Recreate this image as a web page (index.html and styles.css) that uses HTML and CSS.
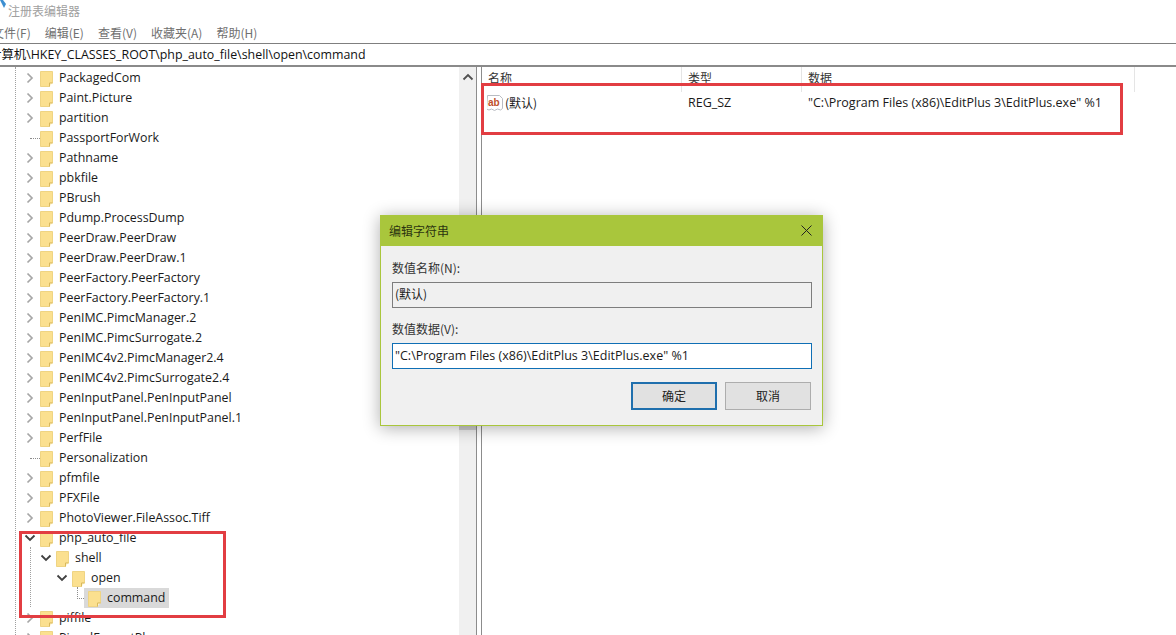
FILE: index.html
```html
<!DOCTYPE html>
<html lang="zh-CN">
<head>
<meta charset="utf-8">
<title>注册表编辑器</title>
<link rel="stylesheet" href="styles.css">
</head>
<body>
<svg class="defs" width="0" height="0" aria-hidden="true">
  <defs>
    <symbol id="folder" viewBox="0 0 13 16">
      <path d="M.5.500h12v11.500h-3v3.500H.5z" fill="#fbe08f" stroke="#efd483"/>
      <path d="M9.500 15.500V12h3" fill="#fff3c9" stroke="#d9b95c"/>
    </symbol>
    <symbol id="right" viewBox="0 0 8 12"><path d="M1.500 1.500 6 6l-4.500 4.500" fill="none" stroke="#a6a6a6" stroke-width="1.700"/></symbol>
    <symbol id="down" viewBox="0 0 12 8"><path d="M1.500 1.500 6 6l4.500-4.500" fill="none" stroke="#404040" stroke-width="1.800"/></symbol>
  </defs>
</svg>
<div class="app">
  <header class="titlebar">
    <svg class="app-icon" viewBox="0 0 6 8" aria-hidden="true"><path d="M0 0h3l3 4-2 4z" fill="#3d8fd1"/></svg>
    <span>注册表编辑器</span>
  </header>
  <nav class="menu">
    <span>文件(F)</span><span>编辑(E)</span><span>查看(V)</span><span>收藏夹(A)</span><span>帮助(H)</span>
  </nav>
  <div class="address">计算机\HKEY_CLASSES_ROOT\php_auto_file\shell\open\command</div>
  <main class="panes">
    <section class="tree-pane">
      <div class="tree" id="tree">
        <div class="guide guide-root"></div>
        <div class="guide guide-php"></div>
        <div class="row"><svg class="exp"><use href="#right"/></svg><svg class="fld"><use href="#folder"/></svg><span class="lbl">PackagedCom</span></div>
        <div class="row"><svg class="exp"><use href="#right"/></svg><svg class="fld"><use href="#folder"/></svg><span class="lbl">Paint.Picture</span></div>
        <div class="row"><svg class="exp"><use href="#right"/></svg><svg class="fld"><use href="#folder"/></svg><span class="lbl">partition</span></div>
        <div class="row"><i class="leaf"></i><svg class="fld"><use href="#folder"/></svg><span class="lbl">PassportForWork</span></div>
        <div class="row"><svg class="exp"><use href="#right"/></svg><svg class="fld"><use href="#folder"/></svg><span class="lbl">Pathname</span></div>
        <div class="row"><svg class="exp"><use href="#right"/></svg><svg class="fld"><use href="#folder"/></svg><span class="lbl">pbkfile</span></div>
        <div class="row"><svg class="exp"><use href="#right"/></svg><svg class="fld"><use href="#folder"/></svg><span class="lbl">PBrush</span></div>
        <div class="row"><svg class="exp"><use href="#right"/></svg><svg class="fld"><use href="#folder"/></svg><span class="lbl">Pdump.ProcessDump</span></div>
        <div class="row"><svg class="exp"><use href="#right"/></svg><svg class="fld"><use href="#folder"/></svg><span class="lbl">PeerDraw.PeerDraw</span></div>
        <div class="row"><svg class="exp"><use href="#right"/></svg><svg class="fld"><use href="#folder"/></svg><span class="lbl">PeerDraw.PeerDraw.1</span></div>
        <div class="row"><svg class="exp"><use href="#right"/></svg><svg class="fld"><use href="#folder"/></svg><span class="lbl">PeerFactory.PeerFactory</span></div>
        <div class="row"><svg class="exp"><use href="#right"/></svg><svg class="fld"><use href="#folder"/></svg><span class="lbl">PeerFactory.PeerFactory.1</span></div>
        <div class="row"><svg class="exp"><use href="#right"/></svg><svg class="fld"><use href="#folder"/></svg><span class="lbl">PenIMC.PimcManager.2</span></div>
        <div class="row"><svg class="exp"><use href="#right"/></svg><svg class="fld"><use href="#folder"/></svg><span class="lbl">PenIMC.PimcSurrogate.2</span></div>
        <div class="row"><svg class="exp"><use href="#right"/></svg><svg class="fld"><use href="#folder"/></svg><span class="lbl">PenIMC4v2.PimcManager2.4</span></div>
        <div class="row"><svg class="exp"><use href="#right"/></svg><svg class="fld"><use href="#folder"/></svg><span class="lbl">PenIMC4v2.PimcSurrogate2.4</span></div>
        <div class="row"><svg class="exp"><use href="#right"/></svg><svg class="fld"><use href="#folder"/></svg><span class="lbl">PenInputPanel.PenInputPanel</span></div>
        <div class="row"><svg class="exp"><use href="#right"/></svg><svg class="fld"><use href="#folder"/></svg><span class="lbl">PenInputPanel.PenInputPanel.1</span></div>
        <div class="row"><svg class="exp"><use href="#right"/></svg><svg class="fld"><use href="#folder"/></svg><span class="lbl">PerfFile</span></div>
        <div class="row"><i class="leaf"></i><svg class="fld"><use href="#folder"/></svg><span class="lbl">Personalization</span></div>
        <div class="row"><svg class="exp"><use href="#right"/></svg><svg class="fld"><use href="#folder"/></svg><span class="lbl">pfmfile</span></div>
        <div class="row"><svg class="exp"><use href="#right"/></svg><svg class="fld"><use href="#folder"/></svg><span class="lbl">PFXFile</span></div>
        <div class="row"><svg class="exp"><use href="#right"/></svg><svg class="fld"><use href="#folder"/></svg><span class="lbl">PhotoViewer.FileAssoc.Tiff</span></div>
        <div class="row"><svg class="exp exp-open"><use href="#down"/></svg><svg class="fld"><use href="#folder"/></svg><span class="lbl">php_auto_file</span></div>
        <div class="row lvl1"><svg class="exp exp-open"><use href="#down"/></svg><svg class="fld"><use href="#folder"/></svg><span class="lbl">shell</span></div>
        <div class="row lvl2"><svg class="exp exp-open"><use href="#down"/></svg><svg class="fld"><use href="#folder"/></svg><span class="lbl">open</span></div>
        <div class="row lvl3"><i class="leaf leaf-corner"></i><span class="selected"><svg class="fld"><use href="#folder"/></svg><span class="lbl">command</span></span></div>
        <div class="row"><svg class="exp"><use href="#right"/></svg><svg class="fld"><use href="#folder"/></svg><span class="lbl">piffile</span></div>
        <div class="row"><svg class="exp"><use href="#right"/></svg><svg class="fld"><use href="#folder"/></svg><span class="lbl">PicnalFormatPl</span></div>
      </div>
      <div class="scrollbar">
        <svg class="scroll-up" viewBox="0 0 12 8" aria-hidden="true"><path d="M1.500 6.500 6 2l4.500 4.500" fill="none" stroke="#505050" stroke-width="1.800"/></svg>
        <div class="thumb"></div>
      </div>
    </section>
    <div class="splitter"></div>
    <section class="list-pane">
      <div class="list-head">
        <span class="col">名称</span><span class="col">类型</span><span class="col">数据</span><span class="col col-end"></span>
      </div>
      <div class="list-row">
        <span class="cell cell-name">
          <svg class="ab" viewBox="0 0 16 17" aria-hidden="true">
            <path d="M.5 1.500h12l3 3v10l-2 1.500-3-1-3 1.500-3-1.500-2.500 1-2.500-1z" fill="#fff" stroke="#b9bcc2"/>
            <text x="1" y="11.500" class="ab-text">ab</text>
          </svg>
          (默认)
        </span>
        <span class="cell">REG_SZ</span>
        <span class="cell">"C:\Program Files (x86)\EditPlus 3\EditPlus.exe" %1</span>
      </div>
    </section>
  </main>
</div>

<div class="mark mark-list"></div>
<div class="mark mark-tree"></div>

<div class="dialog" role="dialog">
  <div class="dialog-title">
    <span>编辑字符串</span>
    <svg class="close" viewBox="0 0 11 11" aria-hidden="true"><path d="M.5.500l10 10M10.500.500l-10 10" stroke="#222" stroke-width="1" fill="none"/></svg>
  </div>
  <div class="dialog-body">
    <div class="field-label">数值名称(N):</div>
    <div class="field field-off">(默认)</div>
    <div class="field-label field-label-2">数值数据(V):</div>
    <div class="field field-on">"C:\Program Files (x86)\EditPlus 3\EditPlus.exe" %1</div>
    <div class="actions">
      <span class="btn btn-default">确定</span>
      <span class="btn">取消</span>
    </div>
  </div>
</div>
</body>
</html>
```

FILE: styles.css
```css
* { box-sizing: border-box; }
html, body { margin: 0; height: 100%; overflow: hidden; background: #fff; }
body {
  font-family: "Open Sans", "Noto Sans CJK SC", sans-serif;
  font-size: 12px;
  color: #1a1a1a;
}
.defs { position: absolute; }
.app { display: flex; flex-direction: column; height: 635px; overflow: hidden; }

.titlebar {
  height: 20px; display: flex; align-items: center; gap: 2px;
  color: #a0a0a0; font-family: "Noto Sans CJK SC", sans-serif; font-size: 12px;
}
.app-icon { width: 6px; height: 8px; margin-top: -12px; }

.menu {
  height: 23px; display: flex; gap: 14px; align-items: center; margin-left: -8px;
  padding-top: 2px; color: #707070; font-family: "Noto Sans CJK SC", sans-serif; font-size: 12px;
}

.address {
  height: 24px; border-top: 1px solid #7f7f7f; border-bottom: 2px solid #8a8a8a;
  margin-left: -11px; line-height: 21px; white-space: nowrap; font-size: 12.4px; color: #111;
}

.panes { flex: 1; display: flex; min-height: 0; }
.tree-pane { width: 476px; display: flex; flex: none; }
.tree { position: relative; flex: 1; overflow: hidden; padding-top: 1px; }
.row {
  height: 20px; display: flex; align-items: center; padding-left: 24px; white-space: nowrap; font-size: 12.4px;
}
.lvl1 { padding-left: 40px; }
.lvl2 { padding-left: 56px; }
.lvl3 { padding-left: 72px; }
.exp { width: 8px; height: 12px; flex: none; margin: 0 6px 0 2px; }
.exp-open { width: 12px; height: 8px; margin: 0 4px 0 0; }
.leaf {
  width: 10px; height: 1px; flex: none; border-top: 1px dotted #8c8c8c; margin-left: 6px;
  position: relative;
}
.row.lvl3 .leaf { margin-left: 5px; width: 7px; }
.leaf-corner::before {
  content: ""; position: absolute; left: 0; bottom: 0; height: 12px; border-left: 1px dotted #8c8c8c;
}
.fld { width: 13px; height: 16px; flex: none; margin-top: 2px; }
.lbl { margin-left: 6px; line-height: 20px; }
.selected { display: flex; align-items: center; height: 20px; background: #d9d9d9; padding: 0 4px; }
.guide { position: absolute; border-left: 1px dotted #a0a0a0; }
.guide-root { left: 15px; top: 0; bottom: 0; }
.guide-php { left: 30px; top: 480px; height: 60px; }

.scrollbar { width: 17px; flex: none; background: #f0f0f0; display: flex; flex-direction: column; align-items: center; }
.scroll-up { width: 12px; height: 8px; margin-top: 6px; flex: none; }
.thumb { width: 17px; height: 214px; background: #cdcdcd; margin-top: 135px; }

.splitter { width: 6px; flex: none; border-left: 1px solid #8c8c8c; border-right: 1px solid #8c8c8c; }
.list-pane { flex: 1; min-width: 0; }
.list-head { display: grid; grid-template-columns: 200px 120px 333px 1fr; height: 25px; }
.col { padding-left: 6px; line-height: 22px; color: #333; font-family: "Noto Sans CJK SC", sans-serif; border-right: 1px solid #e5e5e5; }
.col-end { border-right: 0; }
.list-row { display: grid; grid-template-columns: 200px 120px 1fr; height: 20px; align-items: center; font-size: 12.5px; }
.cell { padding-left: 6px; white-space: nowrap; }
.cell-name { display: flex; align-items: center; gap: 2px; padding-left: 5px; font-family: "Noto Sans CJK SC", sans-serif; font-size: 12px; }
.ab { width: 16px; height: 17px; flex: none; }
.ab-text { font: bold 10px "Liberation Sans", sans-serif; fill: #c0502c; }

.mark { position: absolute; border: 3px solid #e23d42; pointer-events: none; }
.mark-list { left: 481px; top: 83px; width: 642px; height: 52px; }
.mark-tree { left: 19px; top: 531px; width: 207px; height: 87px; }

.dialog {
  position: absolute; left: 380px; top: 215px; width: 443px; height: 211px;
  background: #f0f0f0; border: 1px solid #a9c63c; box-shadow: 0 2px 16px rgba(0,0,0,.32);
  font-family: "Noto Sans CJK SC", "Open Sans", sans-serif;
}
.dialog-title {
  height: 30px; background: #a9c63c; display: flex; align-items: center; justify-content: space-between;
  padding: 0 6px 2px 8px; color: #2c3410; font-size: 12px;
}
.close { width: 11px; height: 11px; margin-right: 4px; }
.dialog-body { padding: 0 10px 0 11px; display: flex; flex-direction: column; }
.field-label { margin-top: 13px; height: 18px; line-height: 17px; color: #333; }
.field-label-2 { margin-top: 12px; }
.field {
  height: 26px; margin-top: 5px; padding-left: 2px; line-height: 23px; font-size: 12.5px; white-space: nowrap;
  font-family: "Open Sans", "Noto Sans CJK SC", sans-serif;
}
.field-off { border: 1px solid #7d7d7d; background: #f0f0f0; font-family: "Noto Sans CJK SC", sans-serif; font-size: 12px; line-height: 22px; }
.field-on { border: 1px solid #0f6fb5; background: #fff; margin-top: 5px; }
.actions { display: flex; justify-content: flex-end; gap: 8px; margin-top: 13px; padding-right: 1px; }
.btn {
  width: 86px; height: 28px; display: flex; align-items: center; justify-content: center; padding-bottom: 2px;
  background: #e1e1e1; border: 1px solid #adadad; font-size: 12px; color: #222;
}
.btn-default { border: 2px solid #1f6fad; }
```
